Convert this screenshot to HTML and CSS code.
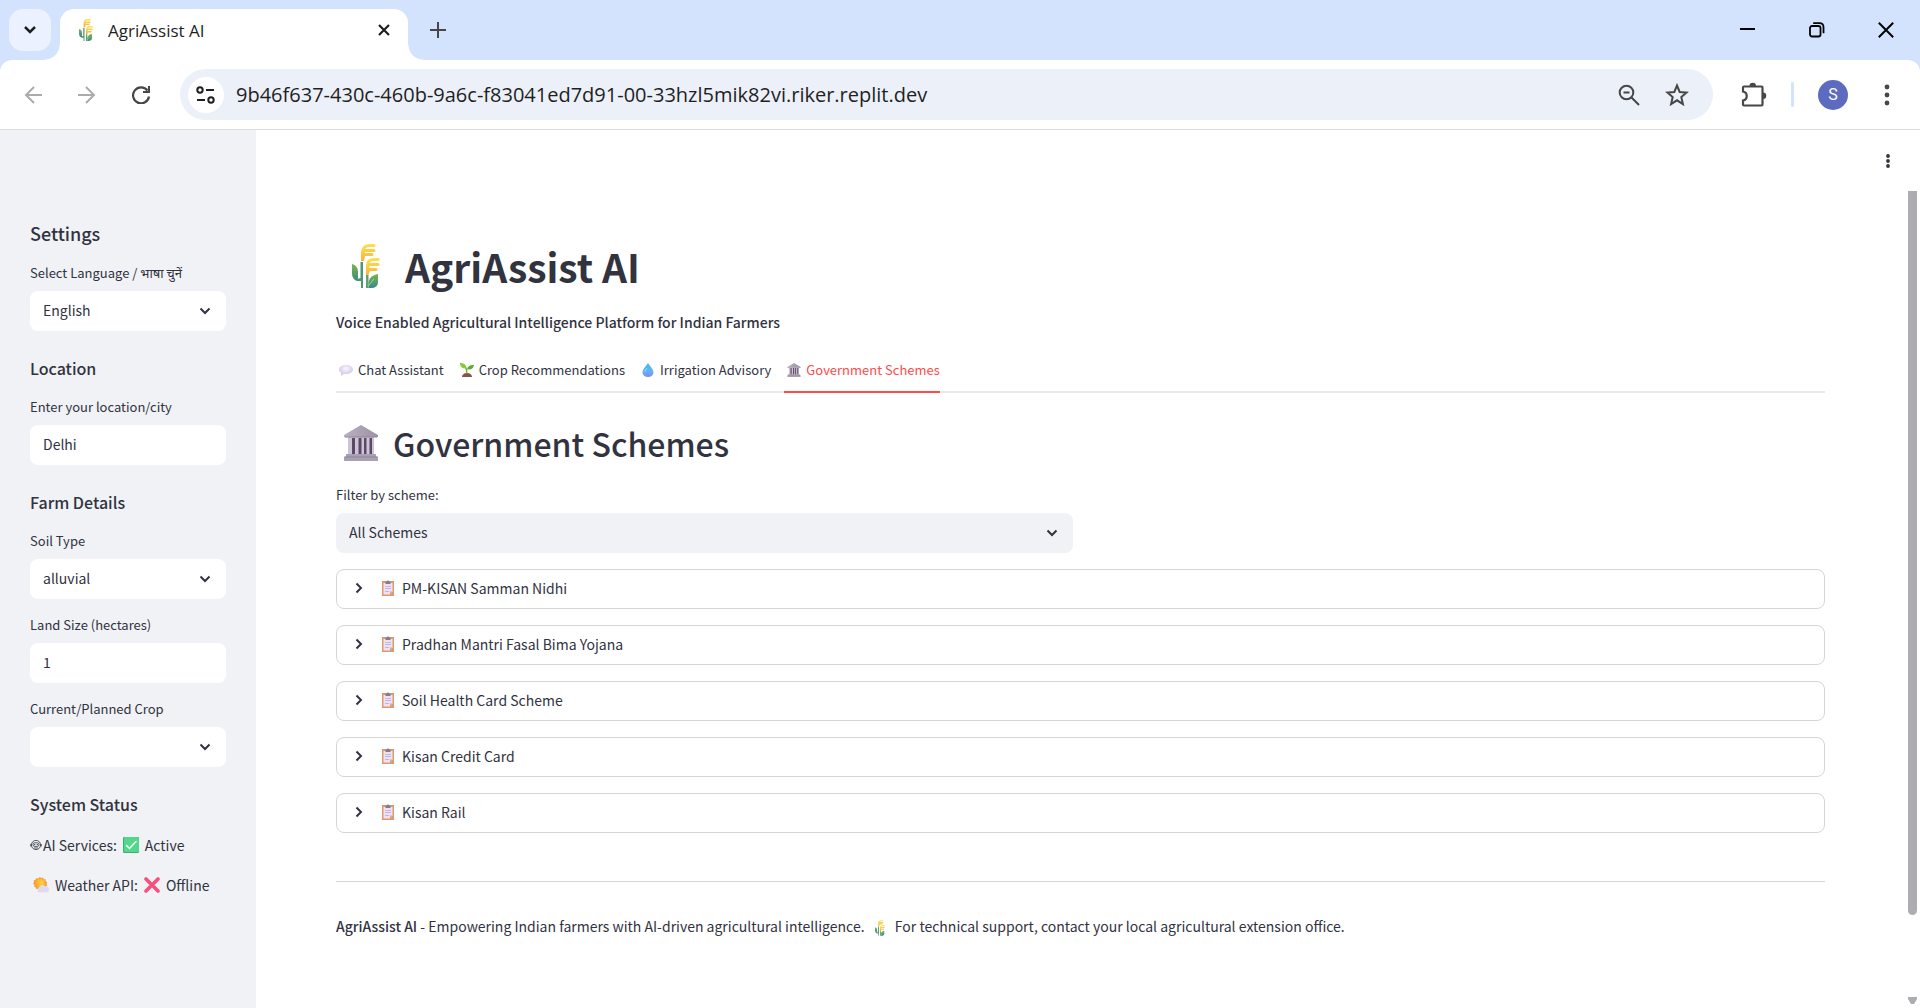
FILE: index.html
```html
<!DOCTYPE html>
<html lang="en">
<head>
<meta charset="utf-8">
<meta name="viewport" content="width=device-width, initial-scale=1">
<title>AgriAssist AI</title>
<link rel="stylesheet" href="styles.css">
</head>
<body>
<svg class="sprite" aria-hidden="true">
  <defs>
    <linearGradient id="gold" x1="0" y1="0" x2="0" y2="1"><stop offset="0" stop-color="#ffe14f"/><stop offset="1" stop-color="#f7b13c"/></linearGradient>
    <linearGradient id="leaf" x1="0" y1="0" x2="0" y2="1"><stop offset="0" stop-color="#79b64a"/><stop offset="1" stop-color="#3b8a86"/></linearGradient>
    <linearGradient id="water" x1="0" y1="0" x2="0" y2="1"><stop offset="0" stop-color="#3fb4ee"/><stop offset=".6" stop-color="#62b4fb"/><stop offset="1" stop-color="#8a83f5"/></linearGradient>
    <radialGradient id="sun" cx=".6" cy=".4" r=".6"><stop offset="0" stop-color="#ffd23c"/><stop offset="1" stop-color="#f8a62b"/></radialGradient>
    <radialGradient id="bubble" cx=".5" cy=".35" r=".6"><stop offset="0" stop-color="#fbf6ff"/><stop offset="1" stop-color="#d3c3e2"/></radialGradient>
    <linearGradient id="stone" x1="0" y1="0" x2="1" y2="0"><stop offset="0" stop-color="#b9b0c0"/><stop offset="1" stop-color="#9c92a6"/></linearGradient>
  </defs>
  <symbol id="chevron-down" viewBox="0 0 12 8"><path d="M1.500 1.500 6 6l4.500-4.500" fill="none" stroke="currentColor" stroke-width="2"/></symbol>
  <symbol id="chevron-right" viewBox="0 0 8 12"><path d="M1.500 1.500 6 6l-4.500 4.500" fill="none" stroke="currentColor" stroke-width="2"/></symbol>
  <symbol id="rice" viewBox="0 0 28 44">
    <path d="M0 20C4 21 6 24 6 28V35H9V37H5C2 36 0 33 0 30Z" fill="url(#leaf)"/>
    <path d="M8.500 34V18H11V44H9V37H5V35Z" fill="#4c9675"/>
    <path d="M9 17V10C9 4 12 0 17 0H22C24 0 24 3 22 3H17Q14 3 13 5H22C24 5 24 8 22 8H13V9H20C22 9 22 12 20 12H13L12 17Z" fill="url(#gold)"/>
    <path d="M14 32V23C14 17 17 14 21 14H26C28.500 14 28.500 17 26 17H20Q18 18 17.500 19H26C28 19 28 22 26 22H17.500V24H24C26 24 26 27 24 27H18L16 32Z" fill="url(#gold)"/>
    <path d="M14 31H16.500V44H14Z" fill="#5f9e78"/>
    <path d="M26 30V38C26 42 23 44 19 44H16.500V39C17 34 20 31 26 30Z" fill="url(#leaf)"/>
    <path d="M16 42 22 35" stroke="#a5d2b0" fill="none"/>
  </symbol>
  <symbol id="bank" viewBox="0 0 34 36">
    <path d="M17 0 34 10V12H0V10Z" fill="url(#stone)"/>
    <path d="M4 12H30V30H4Z" fill="#cdc5d3"/>
    <path d="M8 13H11V30H8ZM14.500 13H17.500V30H14.500ZM20 13H22.500V30H20ZM25.500 13H28V30H25.500Z" fill="#5d4868"/>
    <path d="M2 29H32V31.500H34V36H0V31.500H2Z" fill="#aaa0b1"/>
    <path d="M1 12H33M1 32H33" stroke="#8f8498" stroke-width="1"/>
  </symbol>
  <symbol id="chat" viewBox="0 0 14 12">
    <path d="M7 1C11 1 14 3 14 5.500S11 10 7 10C6 10 5.500 10 5 9.800L3 11.500C2 12 2 11 2.200 9C1 8 0 7 0 5.500 0 3 3 1 7 1Z" fill="url(#bubble)"/>
  </symbol>
  <symbol id="sprout" viewBox="0 0 14 14">
    <path d="M2 14C2 11.500 4.500 10 7 10S12 11.500 12 14Z" fill="#8b5148"/>
    <path d="M6.200 11C6 8 6 6 4.800 4.800L6 4C7.500 6 7.300 8 7.500 11Z" fill="#74a52e"/>
    <path d="M0 0C3 0 6 .5 6.500 5.500C3 5.500 0 4.500 0 0Z" fill="#86cc31"/>
    <path d="M14 2C10.500 1.500 7.500 3 7 6.500C11 7 13.500 5.500 14 2Z" fill="#5faa35"/>
  </symbol>
  <symbol id="drop" viewBox="0 0 11 14"><path d="M5.500 0C7.500 3.500 11 6 11 9.500A5.500 4.500 0 0 1 0 9.500C0 6 3.500 3.500 5.500 0Z" fill="url(#water)"/><path d="M2.500 8.500Q3 6.500 4.500 5" stroke="#9fdbfb" fill="none"/></symbol>
  <symbol id="clipboard" viewBox="0 0 12 16">
    <path d="M0 1H12V16H0Z" fill="#e09a6a"/>
    <path d="M1.500 3H10.500V11.500L8 14.500H1.500Z" fill="#ebe3f4"/>
    <path d="M10.500 11.500 8 14.500 8 11.500Z" fill="#b9a8cb"/>
    <path d="M3.500 1.500H5Q6-1 7 1.500H8.500V4H3.500Z" fill="#85798f"/>
    <path d="M3 6.500H9M3 8.500H9M3 11.500H7" stroke="#c3b5d3" stroke-width="1"/>
  </symbol>
  <symbol id="robot" viewBox="0 0 12 12">
    <g fill="none" stroke="#31333f" stroke-width=".8"><circle cx="6" cy="6" r="4.600"/><rect x="3" y="3.800" width="6" height="3.600" rx="1.500"/><path d="M.7 5V7.500M11.300 5V7.500M4 9H8"/></g>
    <circle cx="4.700" cy="5.600" r=".7" fill="#31333f"/><circle cx="7.300" cy="5.600" r=".7" fill="#31333f"/>
  </symbol>
  <symbol id="check" viewBox="0 0 16 16"><rect width="16" height="16" rx="1" fill="#3fae72"/><rect x="1" width="15" height="15" rx="1" fill="#53d78d"/><path d="M3.500 8.500 6.500 11.500 13 4.500" stroke="#fff" stroke-width="1.500" stroke-linecap="round" fill="none"/></symbol>
  <symbol id="cross" viewBox="0 0 16 16"><path d="M2 2 14 14M14 2 2 14" stroke="#f8507c" stroke-width="3.600" stroke-linecap="round"/></symbol>
  <symbol id="weather" viewBox="0 0 16 16">
    <path d="M7 0 8.300 1.200 10 .6 10.800 2.200 12.600 2.300 12.700 4.200 14.200 5.200 13.500 7 14.200 8.600 12.700 9.600 12.400 11.500 10.600 11.600 9.700 13.200 8 12.500 6.300 13.500 5.200 12.100 3.300 12.100 2.900 10.400 1 9.600 1.600 7.900 0 6.700 1 5.200 .7 3.600 2.400 2.900 3 1.300 4.900 1.400Z" fill="#f69a3e"/>
    <circle cx="7.200" cy="6.800" r="5.300" fill="url(#sun)"/>
    <path d="M6 15.500A2.700 2.700 0 0 1 6 10.600 3.400 3.400 0 0 1 12 9.200 3.200 3.200 0 1 1 13 15.500Z" fill="#e0daee"/>
  </symbol>
</svg>

<header class="browser">
  <div class="tabstrip">
    <button class="tab-search" aria-label="Search tabs"><svg width="14" height="10"><path d="M2 2 7 7l5-5" fill="none" stroke="#1f1f1f" stroke-width="2.500"/></svg></button>
    <div class="browser-tab">
      <svg class="favicon"><use href="#rice"/></svg>
      <span class="tab-title">AgriAssist AI</span>
      <button class="icon-button" aria-label="Close tab"><svg width="14" height="14"><path d="M2 2 12 12M12 2 2 12" stroke="#1f1f1f" stroke-width="2.200"/></svg></button>
    </div>
    <button class="icon-button new-tab" aria-label="New tab"><svg width="16" height="16"><path d="M8 0V16M0 8H16" stroke="#474747" stroke-width="2"/></svg></button>
    <div class="window-controls">
      <button class="icon-button" aria-label="Minimize"><svg width="16" height="16"><path d="M0 7H15" stroke="#000" stroke-width="2"/></svg></button>
      <button class="icon-button" aria-label="Restore"><svg width="16" height="16"><g fill="none" stroke="#000" stroke-width="1.800"><rect x="1" y="4" width="10.500" height="10.500" rx="2"/><path d="M4.200 1.200H10.500Q14.500 1.200 14.500 5.200V11.200"/></g></svg></button>
      <button class="icon-button" aria-label="Close window"><svg width="16" height="16"><path d="M.8.800 15.200 15.200M15.200.8.800 15.200" stroke="#000" stroke-width="2"/></svg></button>
    </div>
  </div>
  <div class="toolbar">
    <nav class="history" aria-label="History">
      <button class="icon-button" aria-label="Back"><svg width="18" height="18"><path d="M18 9H2M10 1 2 9l8 8" fill="none" stroke="#ababab" stroke-width="2"/></svg></button>
      <button class="icon-button" aria-label="Forward"><svg width="18" height="18"><path d="M0 9H16M8 1l8 8-8 8" fill="none" stroke="#ababab" stroke-width="2"/></svg></button>
      <button class="icon-button" aria-label="Reload"><svg width="18" height="18"><path d="M15.500 4.500A8 8 0 1 0 17 10.500" fill="none" stroke="#474747" stroke-width="2.200"/><path d="M18 0V7H11V5H16V0Z" fill="#474747"/></svg></button>
    </nav>
    <div class="omnibox">
      <button class="site-info" aria-label="Site information"><svg width="20" height="18"><g fill="none" stroke="#1f1f1f" stroke-width="2"><circle cx="4" cy="4" r="2.700"/><path d="M10 4H18M1 14H9"/><circle cx="15" cy="14" r="2.700"/></g></svg></button>
      <input class="url" type="text" aria-label="Address" value="9b46f637-430c-460b-9a6c-f83041ed7d91-00-33hzl5mik82vi.riker.replit.dev">
      <button class="icon-button" aria-label="Zoom"><svg width="22" height="22"><g fill="none" stroke="#474747" stroke-width="2"><circle cx="8.500" cy="8.500" r="6.800"/><path d="M5.500 8.500H11.500M13.500 13.500 21 21"/></g></svg></button>
      <button class="icon-button" aria-label="Bookmark"><svg width="24" height="24"><path d="M12 2.500 14.700 9 21.500 9.600 16.300 14 17.900 21 12 17.300 6.100 21 7.700 14 2.500 9.600 9.300 9Z" fill="none" stroke="#474747" stroke-width="2"/></svg></button>
    </div>
    <button class="icon-button extensions" aria-label="Extensions"><svg width="26" height="26"><path d="M2 5.500Q2 4.500 3 4.500H20.500Q21.500 4.500 21.500 5.500V22.500Q21.500 23.500 20.500 23.500H3Q2 23.500 2 22.500V18.500C7 17.500 7 10.500 2 9.500Z" fill="none" stroke="#474747" stroke-width="2.200"/><path d="M8.500 4A3.200 3.200 0 0 1 15 4ZM22 10.500A3.200 3.200 0 0 1 22 17Z" fill="#474747"/></svg></button>
    <span class="divider"></span>
    <button class="avatar" aria-label="Profile">S</button>
    <button class="icon-button" aria-label="Browser menu"><svg width="6" height="22"><g fill="#474747"><circle cx="3" cy="3" r="2.400"/><circle cx="3" cy="11" r="2.400"/><circle cx="3" cy="19" r="2.400"/></g></svg></button>
  </div>
</header>

<div class="app">
  <aside class="sidebar">
    <h2 class="side-title">Settings</h2>
    <div class="field">
      <label for="language">Select Language / भाषा चुनें</label>
      <div class="select-box"><select id="language"><option>English</option></select><svg class="arrow"><use href="#chevron-down"/></svg></div>
    </div>
    <h3 class="side-heading">Location</h3>
    <div class="field">
      <label for="city">Enter your location/city</label>
      <input id="city" type="text" value="Delhi">
    </div>
    <h3 class="side-heading">Farm Details</h3>
    <div class="field">
      <label for="soil">Soil Type</label>
      <div class="select-box"><select id="soil"><option>alluvial</option></select><svg class="arrow"><use href="#chevron-down"/></svg></div>
    </div>
    <div class="field">
      <label for="land">Land Size (hectares)</label>
      <input id="land" type="text" inputmode="decimal" value="1">
    </div>
    <div class="field">
      <label for="crop">Current/Planned Crop</label>
      <div class="select-box"><select id="crop"><option></option></select><svg class="arrow"><use href="#chevron-down"/></svg></div>
    </div>
    <h3 class="side-heading">System Status</h3>
    <p class="status"><svg class="robot"><use href="#robot"/></svg><span>AI Services:</span><svg class="mark"><use href="#check"/></svg><span>Active</span></p>
    <p class="status"><svg class="mark sky"><use href="#weather"/></svg><span>Weather API:</span><svg class="mark"><use href="#cross"/></svg><span>Offline</span></p>
  </aside>

  <div class="page">
    <div class="app-header">
      <button class="icon-button" aria-label="App menu"><svg width="6" height="14"><g fill="#31333f"><circle cx="3" cy="2" r="1.900"/><circle cx="3" cy="7" r="1.900"/><circle cx="3" cy="12" r="1.900"/></g></svg></button>
    </div>
    <div class="scroll-area">
      <main class="content">
        <h1 class="title"><svg><use href="#rice"/></svg>AgriAssist AI</h1>
        <p class="tagline">Voice Enabled Agricultural Intelligence Platform for Indian Farmers</p>
        <div class="tabs" role="tablist">
          <button role="tab" aria-selected="false"><svg><use href="#chat"/></svg>Chat Assistant</button>
          <button role="tab" aria-selected="false"><svg><use href="#sprout"/></svg>Crop Recommendations</button>
          <button role="tab" aria-selected="false"><svg><use href="#drop"/></svg>Irrigation Advisory</button>
          <button role="tab" aria-selected="true"><svg><use href="#bank"/></svg>Government Schemes</button>
        </div>
        <h2 class="section-title"><svg><use href="#bank"/></svg>Government Schemes</h2>
        <div class="field filter">
          <label for="scheme">Filter by scheme:</label>
          <div class="select-box"><select id="scheme"><option>All Schemes</option></select><svg class="arrow"><use href="#chevron-down"/></svg></div>
        </div>
        <details class="scheme"><summary><svg class="caret"><use href="#chevron-right"/></svg><svg class="clip"><use href="#clipboard"/></svg>PM-KISAN Samman Nidhi</summary></details>
        <details class="scheme"><summary><svg class="caret"><use href="#chevron-right"/></svg><svg class="clip"><use href="#clipboard"/></svg>Pradhan Mantri Fasal Bima Yojana</summary></details>
        <details class="scheme"><summary><svg class="caret"><use href="#chevron-right"/></svg><svg class="clip"><use href="#clipboard"/></svg>Soil Health Card Scheme</summary></details>
        <details class="scheme"><summary><svg class="caret"><use href="#chevron-right"/></svg><svg class="clip"><use href="#clipboard"/></svg>Kisan Credit Card</summary></details>
        <details class="scheme"><summary><svg class="caret"><use href="#chevron-right"/></svg><svg class="clip"><use href="#clipboard"/></svg>Kisan Rail</summary></details>
        <footer class="footer"><strong>AgriAssist AI</strong> - Empowering Indian farmers with AI-driven agricultural intelligence. <svg><use href="#rice"/></svg> For technical support, contact your local agricultural extension office.</footer>
      </main>
      <div class="scrollbar" aria-hidden="true"><span class="thumb"></span><svg width="9" height="7"><path d="M0 0H9V2L6 7H3L0 2Z" fill="#adadb1"/></svg></div>
    </div>
  </div>
</div>
</body>
</html>
```
FILE: styles.css
```css
* { box-sizing: border-box; }

body {
  margin: 0;
  min-height: 100vh;
  display: flex;
  flex-direction: column;
  background: #fff;
  color: #31333f;
  font-family: "Noto Sans CJK SC", "Noto Sans", sans-serif;
  font-size: 14px;
  line-height: 24px;
}

h1, h2, h3, p { margin: 0; }
button, input, select { font: inherit; color: inherit; border: 0; padding: 0; background: none; }
svg { flex: none; }
.sprite { position: absolute; width: 0; height: 0; }

.icon-button {
  width: 30px;
  height: 30px;
  display: flex;
  align-items: center;
  justify-content: center;
  flex: none;
}

/* Browser chrome */
.browser { font-family: "Open Sans", "Noto Sans", sans-serif; background: #d3e3fd; color: #1f1f1f; }
.tabstrip { display: flex; align-items: flex-start; height: 60px; padding: 9px 12px 0 9px; }
.tab-search {
  width: 42px;
  height: 42px;
  border-radius: 14px;
  background: #ebf1fe;
  display: flex;
  align-items: center;
  justify-content: center;
}
.browser-tab {
  position: relative;
  width: 348px;
  height: 51px;
  margin-left: 9px;
  padding: 0 9px 9px 19px;
  border-radius: 14px 14px 0 0;
  background: #fff;
  display: flex;
  align-items: center;
}
.browser-tab::before, .browser-tab::after {
  content: "";
  position: absolute;
  bottom: 0;
  width: 15px;
  height: 15px;
}
.browser-tab::before { right: 100%; background: radial-gradient(circle at 0 0, transparent 14px, #fff 15px); }
.browser-tab::after { left: 100%; background: radial-gradient(circle at 100% 0, transparent 14px, #fff 15px); }
.favicon { width: 14px; height: 22px; }
.tab-title { flex: 1; margin-left: 15px; padding-top: 2px; font-size: 17px; }
.new-tab { margin: 6px 0 0 15px; }
.window-controls { display: flex; gap: 39px; margin: 6px 0 0 auto; padding-right: 7px; }

.toolbar {
  display: flex;
  align-items: center;
  padding: 9px 18px;
  background: #fff;
  border-bottom: 1px solid #dcdcdf;
  border-radius: 12px 12px 0 0;
}
.history { display: flex; gap: 24px; margin-right: 24px; }
.omnibox {
  flex: 1;
  display: flex;
  align-items: center;
  gap: 18px;
  height: 51px;
  padding: 0 21px 0 8px;
  border-radius: 26px;
  background: #ecf0f9;
}
.site-info {
  width: 36px;
  height: 36px;
  margin-right: -6px;
  border-radius: 50%;
  background: #fff;
  display: flex;
  align-items: center;
  justify-content: center;
}
.url { flex: 1; min-width: 0; font-size: 20px; }
.extensions { margin-left: 26px; }
.divider { width: 3px; height: 25px; margin: 0 24px 0 22px; border-radius: 2px; background: #d3e3fd; }
.avatar {
  width: 30px;
  height: 30px;
  margin-right: 24px;
  border-radius: 50%;
  background: #5c6bc0;
  color: #fff;
  font-family: Roboto, sans-serif;
  font-size: 16px;
}

/* App shell */
.app { flex: 1; display: flex; }
.sidebar {
  flex: none;
  width: 256px;
  padding: 81px 30px 24px;
  background: #f0f2f6;
  display: flex;
  flex-direction: column;
  gap: 16px;
}
.side-title { padding-top: 8px; font-size: 18px; line-height: 28px; font-weight: 500; }
.side-heading { padding-top: 8px; font-size: 16px; line-height: 26px; font-weight: 500; }

.field { display: flex; flex-direction: column; gap: 4px; }
.field label { padding-bottom: 4px; font-size: 13px; line-height: 20px; white-space: nowrap; }
.field input, .field select {
  width: 100%;
  height: 40px;
  padding: 0 13px 2px;
  border-radius: 8px;
  background: #fff;
  appearance: none;
}
.select-box { display: grid; align-items: center; }
.select-box > * { grid-area: 1 / 1; }
.arrow { width: 12px; height: 8px; margin-right: 15px; justify-self: end; pointer-events: none; }

.status { display: flex; align-items: center; gap: 6px; height: 24px; white-space: nowrap; }
.robot { width: 12px; height: 12px; margin-right: -5px; }
.mark { width: 16px; height: 16px; }
.sky { margin-left: 3px; }

/* Page */
.page { flex: 1; min-width: 0; display: flex; flex-direction: column; }
.app-header { display: flex; justify-content: flex-end; align-items: center; height: 61px; padding-right: 17px; }
.scroll-area { flex: 1; display: flex; }
.content {
  flex: 1;
  min-width: 0;
  padding: 46px 80px 48px;
  display: flex;
  flex-direction: column;
  gap: 16px;
}
.scrollbar { width: 15px; display: flex; flex-direction: column; align-items: center; padding: 0 0 4px; }
.thumb { width: 9px; height: 89%; margin-bottom: auto; border-radius: 0 0 5px 5px; background: #adadb1; }

.title { display: flex; align-items: center; font-size: 39px; line-height: 58px; font-weight: 700; }
.title svg { width: 28px; height: 44px; margin: 0 25px 0 16px; }
.tagline { padding-bottom: 2px; line-height: 22px; font-weight: 500; }

.tabs { display: flex; gap: 13px; box-shadow: inset 0 -2px #e8e8ea; }
.tabs button { display: flex; align-items: center; height: 42px; padding-bottom: 2px; border-bottom: 2px solid transparent; font-size: 13px; }
.tabs svg { width: 14px; height: 14px; margin: 0 5px 0 3px; }
.tabs [aria-selected="true"] { color: #ff4b4b; border-color: #ff4b4b; }

.section-title { display: flex; align-items: center; padding: 12px 0 4px; font-size: 32px; line-height: 44px; font-weight: 500; }
.section-title svg { width: 34px; height: 36px; margin: 0 15px 0 8px; }

.filter { width: 50%; padding-right: 8px; }
.filter select { background: #f0f2f6; }

.scheme { border: 1px solid #d6d6d9; border-radius: 8px; }
.scheme summary { display: flex; align-items: center; height: 38px; padding: 0 18px 2px; list-style: none; }
.caret { width: 8px; height: 12px; }
.clip { width: 12px; height: 16px; margin: 0 8px 0 19px; }

.footer { margin-top: 32px; padding-top: 32px; border-top: 1px solid #d6d6d9; }
.footer strong { font-weight: 500; }
.footer svg { width: 10px; height: 16px; margin: 0 7px; vertical-align: middle; }
```
